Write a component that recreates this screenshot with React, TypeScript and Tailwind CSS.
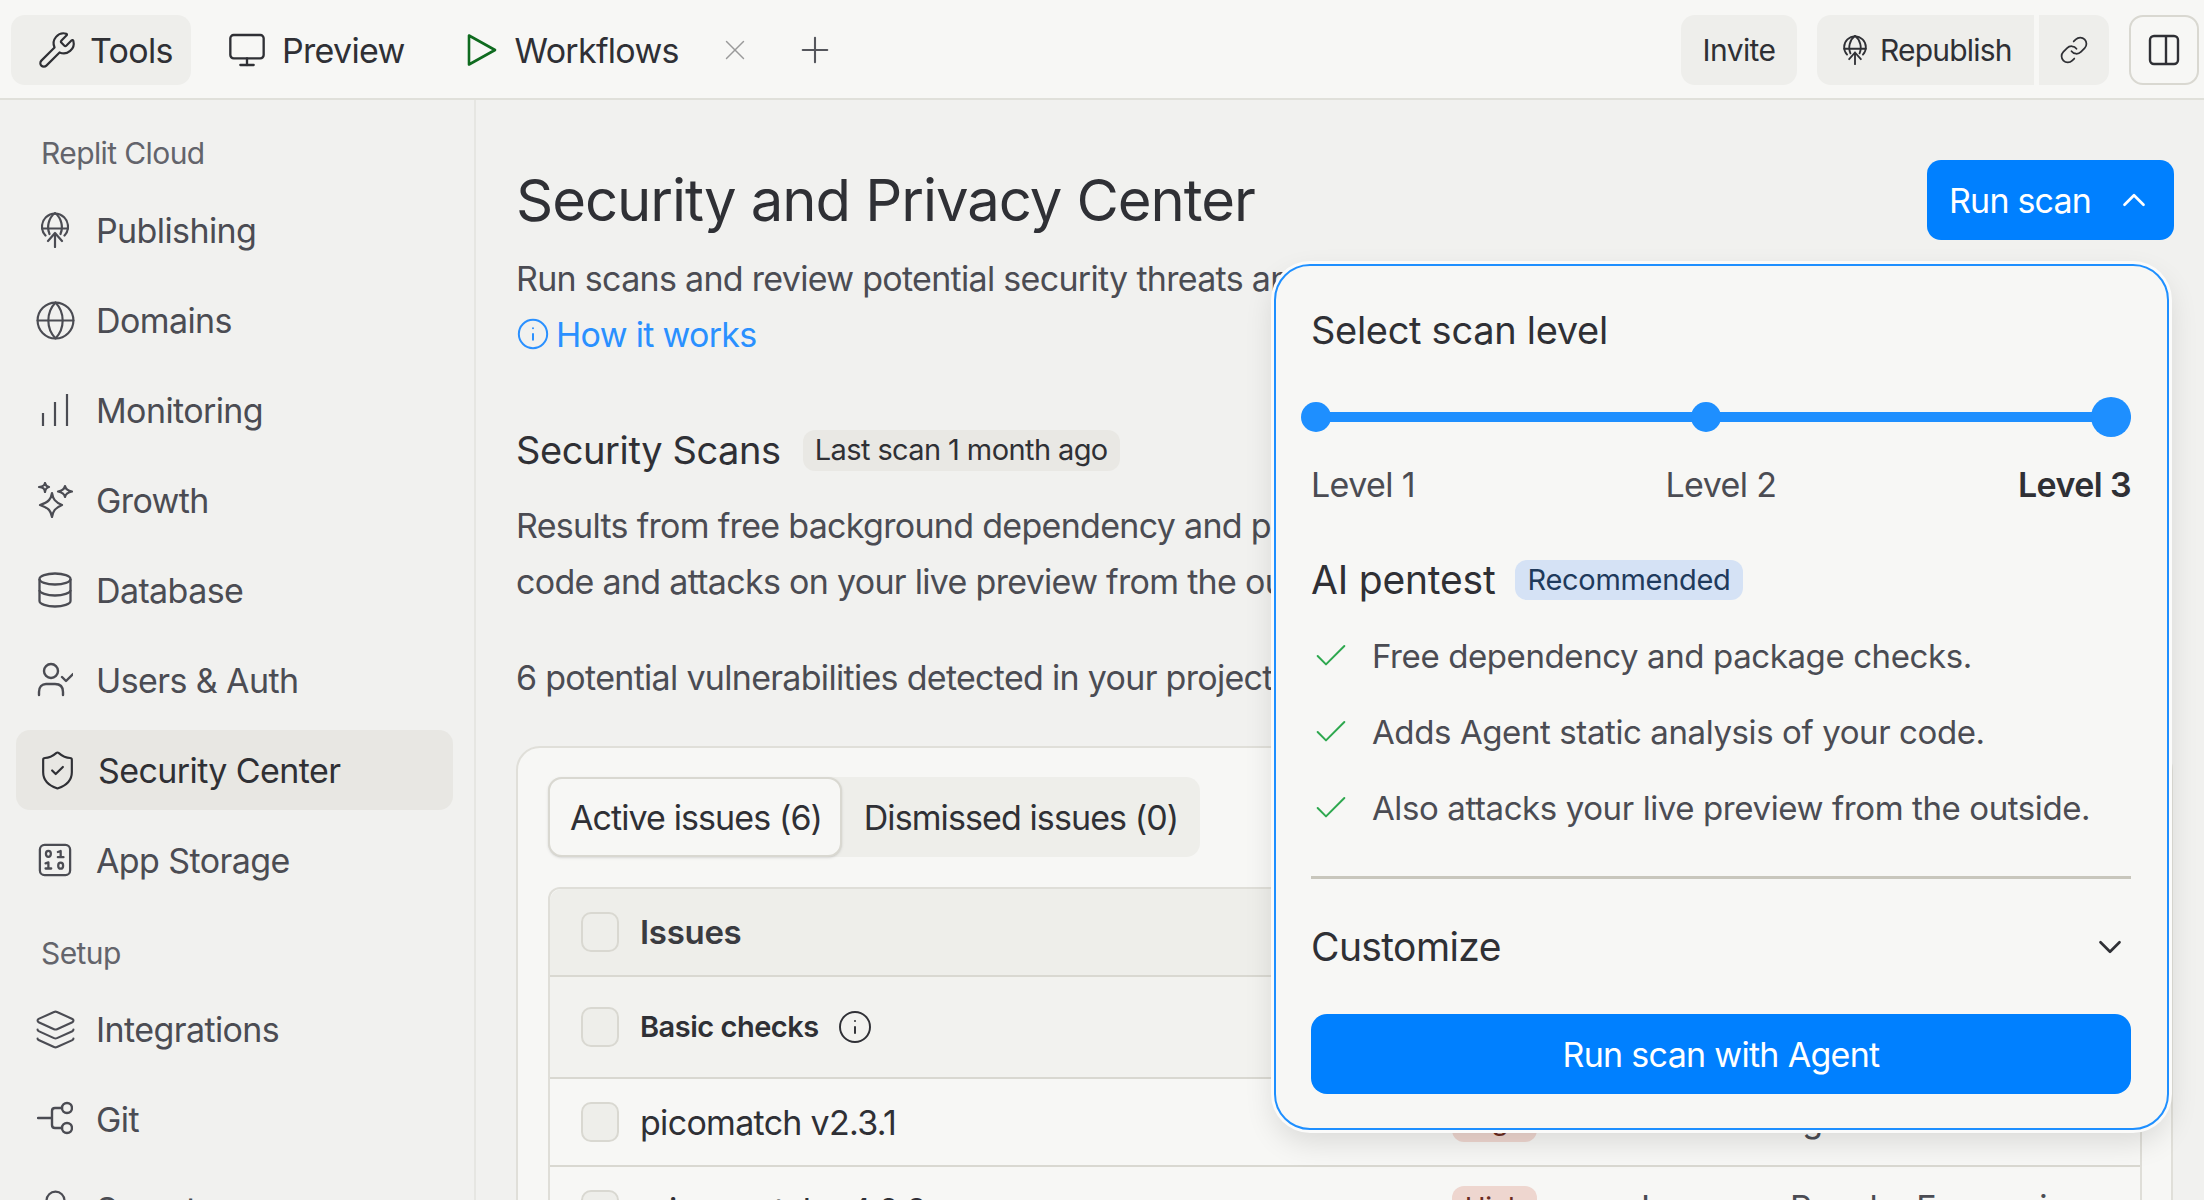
import React from 'react'
import { Wrench, Monitor, X, Plus, Link, ChevronUp, ChevronDown, Check, Info, Globe, ShieldCheck, Layers, Lock } from 'lucide-react'

const PublishGlobe = ({ className = '' }: { className?: string }) => (
  <svg viewBox="0 0 28 36" fill="none" stroke="currentColor" strokeWidth="2.200" strokeLinecap="round" strokeLinejoin="round" className={className}>
    <path d="M4.500 23.500A13 13 0 1 1 23.500 23.500" />
    <path d="M1 16.500H27" />
    <path d="M8.500 22C5.500 15 7.500 6 14 1C20.500 6 22.500 15 19.500 22" />
    <path d="M14 35V21M7 29L14 21L21 29" />
  </svg>
)

const Bars = ({ className = '' }: { className?: string }) => (
  <svg viewBox="0 0 36 36" fill="none" stroke="currentColor" strokeWidth="2.200" className={className}>
    <path d="M6 34V21M18 34V10M30 34V2" />
  </svg>
)

const Stars = ({ className = '' }: { className?: string }) => (
  <svg viewBox="0 0 36 36" fill="none" stroke="currentColor" strokeWidth="2.200" strokeLinejoin="round" className={className}>
    <path d="M15 11C16 17 18 20 25 23C18 26 16 29 15 35C14 29 12 26 3 23C12 20 14 17 15 11Z" />
    <path d="M8 1C8.500 3.500 9.500 4.500 12 5C9.500 5.500 8.500 6.500 8 10C7.500 6.500 6.500 5.500 2 5C6.500 4.500 7.500 3.500 8 1Z" />
    <path d="M28 4C28.500 7 30 8.500 35 9.500C30 10.500 28.500 12 28 15C27.500 12 26 10.500 21 9.500C26 8.500 27.500 7 28 4Z" />
  </svg>
)

const DatabaseIcon = ({ className = '' }: { className?: string }) => (
  <svg viewBox="0 0 36 36" fill="none" stroke="currentColor" strokeWidth="2.300" className={className}>
    <ellipse cx="18" cy="7" rx="15.500" ry="5.500" />
    <path d="M2.500 7V29C2.500 32 10 34.500 18 34.500S33.500 32 33.500 29V7" />
    <path d="M2.500 18C2.500 21 10 23.500 18 23.500S33.500 21 33.500 18" />
  </svg>
)

const UserTick = ({ className = '' }: { className?: string }) => (
  <svg viewBox="0 0 36 36" fill="none" stroke="currentColor" strokeWidth="2.400" strokeLinecap="round" strokeLinejoin="round" className={className}>
    <circle cx="14" cy="9" r="7" />
    <path d="M2 33V30C2 25 5 22 9 22H18C23 22 26 25 26 30V33" />
    <path d="M25 15L29 19L36 12" />
  </svg>
)

const BinaryBox = ({ className = '' }: { className?: string }) => (
  <svg viewBox="0 0 36 36" fill="none" stroke="currentColor" strokeWidth="2.400" strokeLinecap="round" strokeLinejoin="round" className={className}>
    <rect x="2" y="2" width="32" height="32" rx="5" />
    <ellipse cx="11" cy="11.500" rx="2.600" ry="3.200" />
    <path d="M21 9.500L24 8.500V15M21 15H27" />
    <path d="M8 21.500L11 20.500V27M8 27H14" />
    <ellipse cx="24" cy="24" rx="2.600" ry="3.200" />
  </svg>
)

const GitIcon = ({ className = '' }: { className?: string }) => (
  <svg viewBox="0 0 36 36" fill="none" stroke="currentColor" strokeWidth="2.400" strokeLinecap="round" strokeLinejoin="round" className={className}>
    <circle cx="30" cy="7" r="5" />
    <circle cx="30" cy="27" r="5" />
    <path d="M1 17H15M25 7H18C16 7 15 8 15 10V24C15 26 16 27 18 27H25" />
  </svg>
)

const PanelIcon = ({ className = '' }: { className?: string }) => (
  <svg viewBox="0 0 32 32" fill="none" stroke="currentColor" strokeWidth="2.400" strokeLinejoin="round" className={className}>
    <rect x="2" y="2" width="28" height="28" rx="4" />
    <path d="M18 2V30" />
  </svg>
)

const PlayIcon = ({ className = '' }: { className?: string }) => (
  <svg viewBox="0 0 30 34" fill="none" stroke="currentColor" strokeWidth="2.600" strokeLinejoin="round" className={className}>
    <path d="M2 2.500L28 17L2 31.500Z" />
  </svg>
)

const upperNav = [
  { label: 'Publishing', icon: <PublishGlobe className="h-[36px] w-[28px]" /> },
  { label: 'Domains', icon: <Globe className="h-[43px] w-[43px]" strokeWidth={1.2} /> },
  { label: 'Monitoring', icon: <Bars className="h-[36px] w-[36px]" /> },
  { label: 'Growth', icon: <Stars className="h-[36px] w-[36px]" /> },
  { label: 'Database', icon: <DatabaseIcon className="h-[36px] w-[36px]" /> },
  { label: 'Users & Auth', icon: <UserTick className="h-[36px] w-[36px]" /> },
  { label: 'Security Center', icon: <ShieldCheck className="h-[43px] w-[43px]" strokeWidth={1.2} />, active: true },
  { label: 'App Storage', icon: <BinaryBox className="h-[34px] w-[34px]" /> },
]

const lowerNav = [
  { label: 'Integrations', icon: <Layers className="h-[43px] w-[43px]" strokeWidth={1.2} /> },
  { label: 'Git', icon: <GitIcon className="h-[36px] w-[36px]" /> },
  { label: 'Secrets', icon: <Lock className="h-[43px] w-[43px]" strokeWidth={1.2} /> },
]

const NavItem = ({ label, icon, active }: { label: string; icon: React.ReactNode; active?: boolean }) => (
  <div className={`mb-[10px] flex h-[80px] shrink-0 items-center rounded-[14px] ${active ? 'bg-[#e8e7e3] text-[#2f3035]' : 'text-[#4b4c53]'}`}>
    <div className={`flex w-[78px] shrink-0 justify-center ${active ? 'pl-[4px]' : ''}`}>{icon}</div>
    <span className={`whitespace-nowrap text-[34px] tracking-[-0.6px] ${active ? 'pl-[4px]' : 'pl-[2px]'}`}>{label}</span>
  </div>
)

const Box = () => <div className="h-[40px] w-[38px] shrink-0 rounded-[10px] border-2 border-[#d9d8d1] bg-[#eeeeea]" />

const rows = [
  { name: 'picomatch v2.3.1', note: 'Untrusted glob' },
  { name: 'micromatch v4.0.8', note: 'Improper Regular Expressions' },
]

export default function App() {
  return (
    <div className="flex h-[1200px] w-[2204px] flex-col overflow-hidden bg-[#f1f1ef] font-[Inter,sans-serif] text-[#2f3035]">
      {/* Top bar */}
      <header className="flex h-[100px] shrink-0 items-center justify-between border-b-2 border-[#e0e0da] bg-[#f7f7f5] pl-[11px] pr-[5px] pt-[2px]">
        <div className="flex items-center text-[34px] tracking-[-0.7px]">
          <div className="flex h-[70px] w-[180px] items-center rounded-[14px] bg-[#eeeeeb] pl-[26px]">
            <Wrench className="h-[40px] w-[40px]" strokeWidth={1.3} />
            <span className="ml-[13px]">Tools</span>
          </div>
          <div className="ml-[36px] flex items-center">
            <Monitor className="h-[40px] w-[40px]" strokeWidth={1.4} />
            <span className="ml-[15px]">Preview</span>
          </div>
          <div className="ml-[62px] flex items-center">
            <PlayIcon className="h-[34px] w-[30px] text-[#0f6b1f]" />
            <span className="ml-[18px]">Workflows</span>
          </div>
          <X className="ml-[39px] h-[34px] w-[34px] text-[#9a9a9a]" strokeWidth={1} />
          <Plus className="ml-[42px] h-[42px] w-[42px] text-[#55565c]" strokeWidth={1.2} />
        </div>
        <div className="flex items-center text-[30px] tracking-[-0.6px]">
          <div className="flex h-[70px] w-[116px] items-center justify-center rounded-[14px] bg-[#eeeeeb]">Invite</div>
          <div className="ml-[20px] flex h-[70px] w-[217px] items-center rounded-l-[14px] bg-[#eeeeeb] pl-[26px]">
            <PublishGlobe className="h-[30px] w-[24px]" />
            <span className="ml-[13px] tracking-[-0.8px]">Republish</span>
          </div>
          <div className="ml-[5px] flex h-[70px] w-[70px] items-center justify-center rounded-r-[14px] bg-[#eeeeeb]">
            <Link className="h-[30px] w-[30px]" strokeWidth={1.4} />
          </div>
          <div className="ml-[20px] flex h-[70px] w-[70px] items-center justify-center rounded-[14px] border-2 border-[#d9d8d1]">
            <PanelIcon className="h-[32px] w-[32px]" />
          </div>
        </div>
      </header>

      <div className="flex min-h-0 flex-1">
        {/* Sidebar */}
        <aside className="flex w-[476px] shrink-0 flex-col overflow-hidden border-r-2 border-[#e6e6e2] pl-[16px] pr-[21px] pt-[33px]">
          <div className="mb-[17px] pl-[25px] text-[30px] leading-[40px] tracking-[-0.6px] text-[#63646b]">Replit Cloud</div>
          {upperNav.map((item) => (
            <NavItem key={item.label} {...item} />
          ))}
          <div className="mb-[16px] mt-[23px] pl-[25px] text-[30px] leading-[40px] tracking-[-0.6px] text-[#63646b]">Setup</div>
          {lowerNav.map((item) => (
            <NavItem key={item.label} {...item} />
          ))}
        </aside>

        {/* Main */}
        <main className="relative min-w-0 flex-1 overflow-hidden pl-[40px] pr-[31px] pt-[64px]">
          <div className="flex items-start justify-between">
            <h1 className="text-[58px] font-normal leading-[72px] tracking-[-1.05px]">Security and Privacy Center</h1>
            <button className="-mr-[1px] -mt-[4px] flex h-[80px] w-[247px] items-center rounded-[14px] bg-[#0080ff] pl-[22px] text-[34px] tracking-[-0.8px] text-white">
              Run scan
              <ChevronUp className="ml-[24px] h-[38px] w-[38px]" strokeWidth={1.7} />
            </button>
          </div>

          <p className="mt-[11px] whitespace-nowrap text-[34px] leading-[56px] tracking-[-0.7px] text-[#4b4c53]">
            Run scans and review potential security threats and vulnerabilities in your project.
          </p>
          <div className="flex h-[54px] items-center text-[34px] tracking-[-0.7px] text-[#2a90ff]">
            <Info className="h-[34px] w-[34px]" strokeWidth={1.4} />
            <span className="ml-[6px]">How it works</span>
          </div>

          <div className="mt-[61px] flex h-[56px] items-center">
            <h2 className="text-[38px] font-normal tracking-[-0.4px]">Security Scans</h2>
            <span className="ml-[22px] flex h-[41px] items-center rounded-[12px] bg-[#e9e8e4] px-[12px] text-[29px] tracking-[-0.6px]">Last scan 1 month ago</span>
          </div>

          <div className="mt-[20px] whitespace-nowrap text-[34px] leading-[56px] tracking-[-0.7px] text-[#4b4c53]">
            <p>Results from free background dependency and package checks on your project.</p>
            <p>code and attacks on your live preview from the outside.</p>
            <p className="mt-[40px]">6 potential vulnerabilities detected in your project.</p>
          </div>

          {/* Issues card */}
          <section className="mt-[40px] h-[600px] rounded-[24px] border-2 border-[#e0dfd9] bg-[#f7f7f5] pl-[30px] pr-[29px] pt-[29px]">
            <div className="flex h-[80px] w-[652px] rounded-[14px] bg-[#eeeeea] text-[34px] tracking-[-0.9px]">
              <div className="flex h-full w-[294px] items-center justify-center rounded-[14px] border-2 border-[#d9d8d1] bg-[#f7f7f5] pl-[2px] shadow-sm">Active issues (6)</div>
              <div className="flex flex-1 items-center justify-center">Dismissed issues (0)</div>
            </div>

            <div className="mt-[30px] rounded-t-[12px] border-x-2 border-t-2 border-[#dfded8]">
              <div className="flex h-[88px] items-center rounded-t-[12px] border-b-2 border-[#d9d8d1] bg-[#eeeeea] pl-[31px]">
                <Box />
                <span className="ml-[21px] pt-[2px] text-[33px] font-semibold tracking-[-0.3px] text-[#3a3b40]">Issues</span>
              </div>
              <div className="flex h-[102px] items-center border-b-2 border-[#d9d8d1] bg-[#f2f2ef] pl-[31px]">
                <Box />
                <span className="ml-[21px] text-[29px] font-semibold tracking-[-0.5px]">Basic checks</span>
                <Info className="ml-[18px] h-[36px] w-[36px]" strokeWidth={1.3} />
              </div>
              {rows.map((row) => (
                <div key={row.name} className="flex h-[88px] items-center border-b-2 border-[#d9d8d1] pl-[31px]">
                  <Box />
                  <span className="ml-[21px] w-[812px] shrink-0 text-[34px] tracking-[-0.7px]">{row.name}</span>
                  <span className="-mt-[4px] flex h-[44px] w-[85px] shrink-0 items-center justify-center rounded-[12px] bg-[#eed6cf] text-[28px] tracking-[-0.5px] text-[#6a2a20]">High</span>
                  <span className="-mt-[6px] ml-[104px] whitespace-nowrap text-[34px] tracking-[-0.7px] text-[#4b4c53]">{row.note}</span>
                </div>
              ))}
            </div>
          </section>

          {/* Scan level popover */}
          <div className="absolute right-[35px] top-[164px] h-[866px] w-[895px] rounded-[36px] border-2 border-[#1e8fff] bg-[#f7f7f5] pl-[35px] pr-[36px] pt-[40px] shadow-[0_0_0_3px_#fbfbfa,0_12px_30px_rgba(0,0,0,0.12)]">
            <h3 className="text-[38px] font-normal leading-[48px] tracking-[-0.3px]">Select scan level</h3>

            <div className="relative mt-[43px] flex h-[40px] items-center">
              <div className="h-[10px] w-full rounded-full bg-[#1e8fff]" />
              <div className="absolute -left-[10px] h-[30px] w-[30px] rounded-full bg-[#1e8fff]" />
              <div className="absolute left-[380px] h-[30px] w-[30px] rounded-full bg-[#1e8fff]" />
              <div className="absolute right-0 h-[40px] w-[40px] rounded-full bg-[#1e8fff]" />
            </div>

            <div className="mt-[26px] grid grid-cols-3 text-[34px] leading-[44px] tracking-[-0.6px] text-[#4b4c53]">
              <span>Level 1</span>
              <span className="text-center">Level 2</span>
              <span className="text-right font-semibold text-[#2f3035]">Level 3</span>
            </div>

            <div className="mt-[51px] flex h-[44px] items-center">
              <span className="text-[39px] tracking-[-0.2px]">AI pentest</span>
              <span className="ml-[20px] flex h-[40px] items-center rounded-[12px] bg-[#d5e2f5] px-[12px] text-[29px] tracking-[-0.3px] text-[#1f3a5c]">Recommended</span>
            </div>

            <ul className="mt-[32px] flex flex-col gap-[32px] text-[33px] leading-[44px] tracking-[-0.4px] text-[#4b4c53]">
              {['Free dependency and package checks.', 'Adds Agent static analysis of your code.', 'Also attacks your live preview from the outside.'].map((line) => (
                <li key={line} className="flex items-center">
                  <Check className="h-[40px] w-[40px] text-[#2ea84f]" strokeWidth={1.2} />
                  <span className="ml-[21px] whitespace-nowrap">{line}</span>
                </li>
              ))}
            </ul>

            <div className="mt-[46px] h-[3px] bg-[#c8c6bc]" />

            <div className="mt-[44px] flex h-[48px] items-center justify-between pr-[2px]">
              <span className="text-[39px] tracking-[-0.6px]">Customize</span>
              <ChevronDown className="h-[38px] w-[38px]" strokeWidth={1.7} />
            </div>

            <button className="mt-[43px] h-[80px] w-full rounded-[16px] bg-[#0080ff] text-[34px] tracking-[-0.7px] text-white">Run scan with Agent</button>
          </div>
        </main>
      </div>
    </div>
  )
}
